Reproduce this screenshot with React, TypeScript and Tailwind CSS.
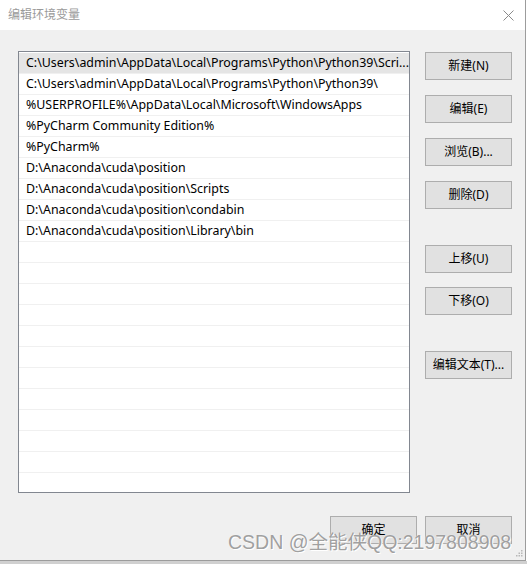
const paths = [
  "C:\\Users\\admin\\AppData\\Local\\Programs\\Python\\Python39\\Scri...",
  "C:\\Users\\admin\\AppData\\Local\\Programs\\Python\\Python39\\",
  "%USERPROFILE%\\AppData\\Local\\Microsoft\\WindowsApps",
  "%PyCharm Community Edition%",
  "%PyCharm%",
  "D:\\Anaconda\\cuda\\position",
  "D:\\Anaconda\\cuda\\position\\Scripts",
  "D:\\Anaconda\\cuda\\position\\condabin",
  "D:\\Anaconda\\cuda\\position\\Library\\bin",
];

const font = "font-['Microsoft_YaHei','Noto_Sans','Noto_Sans_CJK_SC',sans-serif]";

function Btn({ label }: { label: string }) {
  return (
    <button className="h-[28px] w-[87px] border border-[#adadad] bg-[#e1e1e1] text-[12px] text-black leading-none">
      {label}
    </button>
  );
}

export default function App() {
  const rows = Array.from({ length: 22 }, (_, i) => paths[i] ?? "");

  return (
    <div className={`relative h-[564px] w-[527px] overflow-hidden bg-white ${font}`}>
      <div className="flex h-[561px] w-[526px] flex-col border-r border-b border-[#9c9c9c] bg-[#f0f0f0]">
        {/* title bar */}
        <div className="flex h-[30px] shrink-0 items-center justify-between bg-white pl-[8px] pr-[11px]">
          <span className="text-[12px] text-[#9a9a9a]">编辑环境变量</span>
          <svg width="11" height="11" viewBox="0 0 11 11" className="text-[#8a8a8a]">
            <path d="M0.5 0.5 L10.5 10.5 M10.5 0.5 L0.5 10.5" stroke="currentColor" strokeWidth="1" />
          </svg>
        </div>

        <div className="flex pl-[18px] pt-[21px]">
          <div className="h-[442px] w-[392px] overflow-hidden border border-[#828790] bg-white pt-px">
            {rows.map((p, i) => (
              <div
                key={i}
                className={`flex h-[21px] items-center border-b border-[#f0f0f0] pl-[7px] pt-px text-[12.4px] whitespace-nowrap text-black ${
                  i === 0 ? "bg-[#e5e5e5]" : ""
                }`}
              >
                {p}
              </div>
            ))}
          </div>

          <div className="ml-[15px] flex flex-col pt-px">
            <Btn label="新建(N)" />
            <div className="mt-[15px]"><Btn label="编辑(E)" /></div>
            <div className="mt-[15px]"><Btn label="浏览(B)..." /></div>
            <div className="mt-[15px]"><Btn label="删除(D)" /></div>
            <div className="mt-[36px]"><Btn label="上移(U)" /></div>
            <div className="mt-[14px]"><Btn label="下移(O)" /></div>
            <div className="mt-[36px]"><Btn label="编辑文本(T)..." /></div>
          </div>
        </div>

        <div className="mt-[23px] flex gap-[8px] pl-[330px]">
          <Btn label="确定" />
          <Btn label="取消" />
        </div>
      </div>
      <div className="h-[3px] w-full bg-[#d0d0d0]" />

      {/* resize grip */}
      <svg width="7" height="7" viewBox="0 0 7 7" className="absolute left-[516px] top-[550px]">
        <rect x="5" y="0" width="1.5" height="1.5" fill="#b8b8b8" />
        <rect x="2.5" y="2.5" width="1.5" height="1.5" fill="#b8b8b8" />
        <rect x="5" y="2.5" width="1.5" height="1.5" fill="#b8b8b8" />
        <rect x="0" y="5" width="1.5" height="1.5" fill="#b8b8b8" />
        <rect x="2.5" y="5" width="1.5" height="1.5" fill="#b8b8b8" />
        <rect x="5" y="5" width="1.5" height="1.5" fill="#b8b8b8" />
      </svg>

      {/* watermark */}
      <div className="absolute left-[228px] top-[528px] font-['Liberation_Sans','Noto_Sans_CJK_SC',sans-serif] text-[19.5px] whitespace-nowrap text-[#a0a0a0] [text-shadow:0_0_1px_#fff,1px_1px_0_#fff]">
        CSDN @全能侠QQ:2197808908
      </div>
    </div>
  );
}
